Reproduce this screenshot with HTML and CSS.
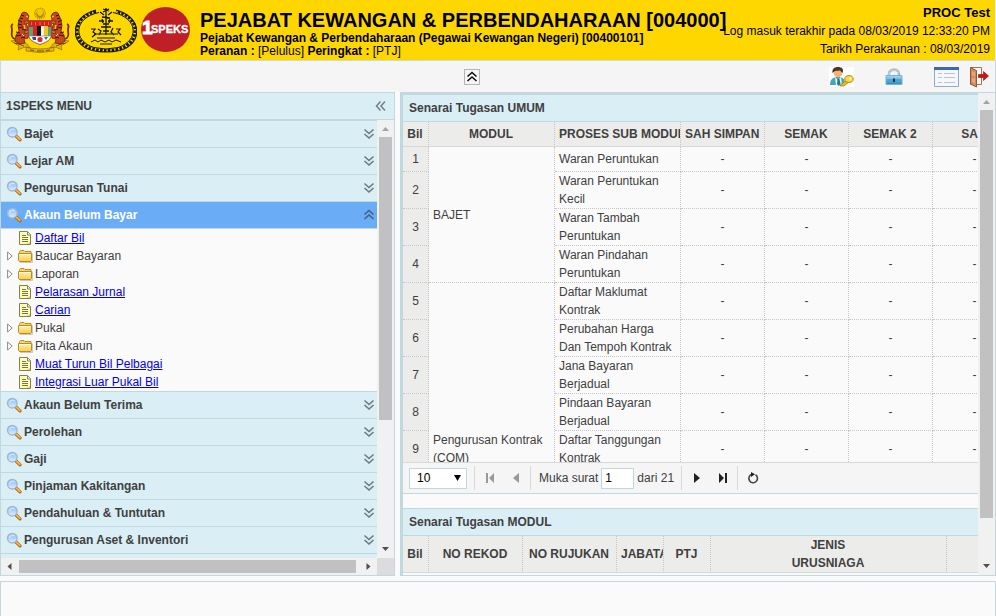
FILE: index.html
```html
<!DOCTYPE html>
<html lang="ms">
<head>
<meta charset="utf-8">
<title>1SPEKS</title>
<link rel="stylesheet" href="styles.css">
</head>
<body>
<svg class="sprite" aria-hidden="true">
  <defs>
    <linearGradient id="lensFill" x1="0" y1="0" x2="0" y2="1"><stop offset="0" stop-color="#84b9f8"/><stop offset="1" stop-color="#dcf1ff"/></linearGradient>
    <linearGradient id="folderFill" x1="0" y1="0" x2="0" y2="1"><stop offset="0" stop-color="#fff4ae"/><stop offset="1" stop-color="#fbcb4f"/></linearGradient>
    <linearGradient id="lockFill" x1="0" y1="0" x2="0" y2="1"><stop offset="0" stop-color="#a9dcf5"/><stop offset="1" stop-color="#2787bd"/></linearGradient>
  </defs>
  <symbol id="lens" viewBox="0 0 16 16">
    <path d="M10 10l4 3.800" stroke="#a8651c" stroke-width="3.200" stroke-linecap="round"/>
    <path d="M10.600 10.400l3.200 3" stroke="#ffb443" stroke-width="1.800" stroke-linecap="round"/>
    <circle cx="6.300" cy="6.200" r="4.800" fill="url(#lensFill)" stroke="#a9b4c6" stroke-width="1.400"/>
    <path d="M3.500 5.600a3 3 0 0 1 5-1.700" fill="none" stroke="#d4e9ff" stroke-width="1.300"/>
  </symbol>
  <symbol id="down" viewBox="0 0 12 12"><path d="M1.500 1.500L6 5.500L10.500 1.500M1.500 6L6 10L10.500 6" fill="none" stroke="currentColor" stroke-width="1.600"/></symbol>
  <symbol id="up" viewBox="0 0 12 12"><path d="M1.500 5.500L6 1.500L10.500 5.500M1.500 10L6 6L10.500 10" fill="none" stroke="currentColor" stroke-width="1.600"/></symbol>
  <symbol id="left" viewBox="0 0 12 12"><path d="M6.500 1.500L2.500 6L6.500 10.500M11 1.500L7 6L11 10.500" fill="none" stroke="currentColor" stroke-width="1.500"/></symbol>
  <symbol id="doc" viewBox="0 0 16 16">
    <path d="M1.500 1.500h8l3 3v10h-11z" fill="#ffffa8" stroke="#80805f"/>
    <path d="M9.500 2v3h3" fill="#fff" stroke="#80805f"/>
    <path d="M4 5.500h4M4 7.500h6M4 9.500h6M4 11.500h6" stroke="#747466"/>
    <path d="M8 14h4v-2z" fill="#f1c97b"/>
  </symbol>
  <symbol id="folder" viewBox="0 0 16 16">
    <path d="M2 14.500h12.500v-9" fill="none" stroke="#c9c9c9"/>
    <path d="M1.500 4.500v-1l1-1h3.500l1 1h6v10h-11.500z" fill="#f5d46e" stroke="#bc8b22"/>
    <path d="M.500 5.500h13v7l-1 1h-11l-1-1z" fill="url(#folderFill)" stroke="#bd8c24"/>
    <path d="M1.500 6.500h11" stroke="#fffbdc"/>
  </symbol>
  <symbol id="tri" viewBox="0 0 6 10"><path d="M.6 1v8L5.200 5z" fill="#fff" stroke="#8a8a8a"/></symbol>
</svg>

<header class="banner">
  <div class="logos">
    <svg class="crest" viewBox="0 0 62 46" role="img" aria-label="Jata Negara">
      <circle cx="31" cy="6.500" r="5.200" fill="#f4cb00" stroke="#b99318" stroke-width="1.400" stroke-dasharray="1.200 .8"/>
      <path d="M28.500 4a3.800 3.800 0 1 0 5 0a3 3 0 1 1-5 0z" fill="#a78318"/>
      <path d="M2 34l8-1 8 4 3 4-5-1-7 3 1-4zM60 34l-8-1-8 4-3 4 5-1 7 3-1-4zM17 40q14 4 28 0v4q-14 3-28 0z" fill="#e2b417" stroke="#8c6c10" stroke-width=".7"/>
      <path d="M5 36l5 1 5 2M57 36l-5 1-5 2M21 43l4 .5M28 44h7M37 43.500l4-.5" fill="none" stroke="#604c0b" stroke-width=".9"/>
      <g id="tiger">
        <path d="M6 32C1 30 3 26 3 23s-2-5 1-6" fill="none" stroke="#7c2a0c" stroke-width="1.800"/>
        <path d="M13 6l2-1 3 1 2 3-1 3 1 3-3 2 2 3-1 5 2 3-1 3-4 1 1 4-6 1-4-3 1-6 3-4-1-5 1-6z" fill="#c9451a" stroke="#541a10" stroke-width=".7"/>
        <path d="M15 14l5 0 1 2-5 1zM15 24l5-1 1 2-5 2z" fill="#d8642c" stroke="#541a10" stroke-width=".5"/>
        <path d="M9 13l4 2M9 17l4 1M9 21l5-1M7 25l4 1M7 29l5-1M12 8l3 1M11 11l3 1M13 22l4 1M12 31l4-1" stroke="#321712" stroke-width="1"/>
        <path d="M17 9l2 1M15 18l1 4M13 27l2 2" stroke="#ffd888" stroke-width="1"/>
      </g>
      <use href="#tiger" transform="matrix(-1 0 0 1 62 0)"/>
      <path d="M19.500 13.500h23v14c0 5-5 8-11.500 10-6.500-2-11.500-5-11.500-10z" fill="#fff" stroke="#8b2a20" stroke-width=".8"/>
      <path d="M20 14h22v6H20z" fill="#d71e28"/>
      <path d="M22.500 15v3M26.500 15v3M31 15v3M35.500 15v3M39.500 15v3" stroke="#f5a420" stroke-width=".7"/>
      <path d="M24 19h4v10h-4z" fill="#d9222b"/><path d="M28 19h4v10h-4z" fill="#15151a"/><path d="M32 19h3v10h-3z" fill="#f7f3e0"/><path d="M35 19h4v10h-4z" fill="#ebc52a"/>
      <path d="M20 20h4v9h-4zM39 20h3v9h-3z" fill="#59a566"/>
      <path d="M23 30h4v3h-3z" fill="#2d4da0"/><circle cx="31" cy="32.500" r="2.600" fill="#d52a39"/><path d="M35 30h4l-2 3z" fill="#3566b0"/><path d="M20 29h22" stroke="#777" stroke-width=".6"/>
    </svg>
    <svg class="crest" viewBox="0 0 62 46" role="img" aria-label="Jabatan Akauntan Negara">
      <g fill="none" stroke="#151803">
        <path d="M24 5.500C-2 11-2 34 19 40.500q12 3 24 0C64 34 64 11 38 5.500" stroke-width="1"/>
        <path d="M21 3C-6 10-6 37 17 43.500q14 3 28 0C68 37 68 10 41 3" stroke-width="1.200"/>
        <path d="M21 4.500C-4 10-4 35.500 18 42q13 3 26 0C66 35.500 66 10 41 4.500" stroke-width="3" stroke-dasharray="2.600 1.300"/>
        <path d="M31 1v27M28 2l6 2M34 2l-6 3M25 5l4 3M37 5l-4 3M27 10l8 1M24 14h5M33 14h5M28 17h6M26 20h10M28 24h6M27 12l1 4M35 12l-1 4" stroke-width="1.300"/>
        <path d="M16 22h4l-2 3 3 2-4 3M23 22l3 2-2 4M38 21l-2 4 3 3M41 22h4l-2 3 3 3M19 27h24M22 31h18" stroke-width="1.200"/>
        <path d="M16 35l4-2 3 2 3-2 4 2 4-2 3 2 4-2 5 2M25 37h12" stroke-width="1"/>
      </g>
    </svg>
    <svg class="crest" viewBox="0 0 62 46" role="img" aria-label="1SPEKS">
      <ellipse cx="24.500" cy="22.500" rx="24.500" ry="22.500" fill="#bf2026"/>
      <text class="mark-one" x="1" y="27">1</text><text class="mark-name" x="10" y="26">SPEKS</text>
    </svg>
  </div>
  <div class="office">
    <h1>PEJABAT KEWANGAN &amp; PERBENDAHARAAN [004000]</h1>
    <p><b>Pejabat Kewangan &amp; Perbendaharaan (Pegawai Kewangan Negeri) [00400101]</b></p>
    <p><b>Peranan :</b> [Pelulus] <b>Peringkat :</b> [PTJ]</p>
  </div>
  <div class="session">
    <p class="user">PROC Test</p>
    <p>Log masuk terakhir pada 08/03/2019 12:33:20 PM</p>
    <p>Tarikh Perakaunan : 08/03/2019</p>
  </div>
</header>

<div class="toolbar">
  <button class="fold" type="button" aria-label="Tutup pengepala"><svg width="12" height="12"><use href="#up"/></svg></button>
  <div class="tools">
    <button type="button" aria-label="Pengguna"><svg width="25" height="20" viewBox="0 0 25 20">
      <path d="M0 0h25v20H0z" fill="#fff"/>
      <path d="M1 18c0-5 2-7 6-8h4c4 1 5 3 5 8z" fill="#4aa3bd"/><path d="M6 10l3 3 3-3 1 8H7z" fill="#edf8ff"/><path d="M8.500 12h2l1 5-2 2-1.500-2z" fill="#128098"/>
      <circle cx="9" cy="6" r="4.300" fill="#f2b577"/><path d="M3.500 6C3 2 5 0 9 0s6 2 4.500 6L11 3.500 6 4z" fill="#51341f"/>
      <path d="M18 13l-7 5v1h4l5-4z" fill="#e9b623" stroke="#a8750b" stroke-width=".7"/><ellipse cx="20" cy="12" rx="4.200" ry="3.400" fill="#ffd94b" stroke="#bf850f"/><circle cx="21.500" cy="11.500" r="1" fill="#fff"/>
    </svg></button>
    <button type="button" aria-label="Kunci"><svg width="18" height="18" viewBox="0 0 18 18">
      <path d="M4 9V5.500C4 .5 14 .5 14 5.500V9" fill="none" stroke="#9fb0b9" stroke-width="2.400"/><path d="M4 8.500V5.500C4 1 14 1 14 5.500" fill="none" stroke="#d5e1e6"/>
      <path d="M1 7.500h16v9H1z" fill="url(#lockFill)" stroke="#6fb6da"/><path d="M1.500 12h15" stroke="#3f97c6"/><path d="M8 10.500h2v3.500H8z" fill="#123a58"/>
    </svg></button>
    <button type="button" aria-label="Senarai"><svg width="25" height="20" viewBox="0 0 25 20">
      <path d="M.5.5h24v19H.5z" fill="#f4f8fc" stroke="#90aacb"/><path d="M0 0h25v3H0z" fill="#3f66ae"/>
      <path d="M4 6.500h4M4 10.500h4M4 15.500h4M10 6.500h11M10 10.500h11M10 15.500h11" stroke="#c2c2c7"/>
    </svg></button>
    <button type="button" aria-label="Log keluar"><svg width="19" height="22" viewBox="0 0 19 22">
      <path d="M.5 1.500h11v17H.5z" fill="#fff" stroke="#a86f4b"/><path d="M.5 1.500l6 3v16.500l-6-3z" fill="#d08a5c" stroke="#985633"/><path d="M2 5l3 1.500v4L2 9.500zM2 11.500l3 1v5L2 16z" fill="#e5a679"/>
      <path d="M8.500 8.500h5v-3l5 4.500-5 4.500v-3h-5z" fill="#c91313" stroke="#9b0707" stroke-width=".6"/>
    </svg></button>
  </div>
</div>

<main class="work">
  <nav class="side">
    <div class="side-head"><span>1SPEKS MENU</span><svg width="12" height="12"><use href="#left"/></svg></div>
    <div class="side-body">
      <div class="groups">
        <button class="group" type="button"><svg class="lens"><use href="#lens"/></svg><span>Bajet</span><svg class="chev"><use href="#down"/></svg></button>
        <button class="group" type="button"><svg class="lens"><use href="#lens"/></svg><span>Lejar AM</span><svg class="chev"><use href="#down"/></svg></button>
        <button class="group" type="button"><svg class="lens"><use href="#lens"/></svg><span>Pengurusan Tunai</span><svg class="chev"><use href="#down"/></svg></button>
        <button class="group open" type="button"><svg class="lens"><use href="#lens"/></svg><span>Akaun Belum Bayar</span><svg class="chev"><use href="#up"/></svg></button>
        <ul class="tree">
          <li><i></i><svg class="node"><use href="#doc"/></svg><a href="#">Daftar Bil</a></li>
          <li><i><svg class="tri"><use href="#tri"/></svg></i><svg class="node"><use href="#folder"/></svg>Baucar Bayaran</li>
          <li><i><svg class="tri"><use href="#tri"/></svg></i><svg class="node"><use href="#folder"/></svg>Laporan</li>
          <li><i></i><svg class="node"><use href="#doc"/></svg><a href="#">Pelarasan Jurnal</a></li>
          <li><i></i><svg class="node"><use href="#doc"/></svg><a href="#">Carian</a></li>
          <li><i><svg class="tri"><use href="#tri"/></svg></i><svg class="node"><use href="#folder"/></svg>Pukal</li>
          <li><i><svg class="tri"><use href="#tri"/></svg></i><svg class="node"><use href="#folder"/></svg>Pita Akaun</li>
          <li><i></i><svg class="node"><use href="#doc"/></svg><a href="#">Muat Turun Bil Pelbagai</a></li>
          <li><i></i><svg class="node"><use href="#doc"/></svg><a href="#">Integrasi Luar Pukal Bil</a></li>
        </ul>
        <button class="group" type="button"><svg class="lens"><use href="#lens"/></svg><span>Akaun Belum Terima</span><svg class="chev"><use href="#down"/></svg></button>
        <button class="group" type="button"><svg class="lens"><use href="#lens"/></svg><span>Perolehan</span><svg class="chev"><use href="#down"/></svg></button>
        <button class="group" type="button"><svg class="lens"><use href="#lens"/></svg><span>Gaji</span><svg class="chev"><use href="#down"/></svg></button>
        <button class="group" type="button"><svg class="lens"><use href="#lens"/></svg><span>Pinjaman Kakitangan</span><svg class="chev"><use href="#down"/></svg></button>
        <button class="group" type="button"><svg class="lens"><use href="#lens"/></svg><span>Pendahuluan &amp; Tuntutan</span><svg class="chev"><use href="#down"/></svg></button>
        <button class="group" type="button"><svg class="lens"><use href="#lens"/></svg><span>Pengurusan Aset &amp; Inventori</span><svg class="chev"><use href="#down"/></svg></button>
      </div>
      <div class="vbar"><svg class="arrow dim" viewBox="0 0 17 17"><path d="M5 11h7L8.500 7z"/></svg><div class="track"><div class="thumb menu-thumb"></div></div><svg class="arrow" viewBox="0 0 17 17"><path d="M5 6h7l-3.500 4z"/></svg></div>
      <div class="hbar"><svg class="arrow" viewBox="0 0 17 17"><path d="M10.500 5v7L6.500 8.500z"/></svg><div class="track"><div class="thumb"></div></div><svg class="arrow" viewBox="0 0 17 17"><path d="M6.500 5v7l4-3.500z"/></svg></div>
      <div class="corner"></div>
    </div>
  </nav>

  <section class="content">
    <div class="panels">
      <h2>Senarai Tugasan UMUM</h2>
      <div class="grid-view">
        <table class="tasks">
          <colgroup><col class="c-no"><col class="c-text"><col class="c-text"><col class="c-step"><col class="c-step"><col class="c-step"><col class="c-step"></colgroup>
          <thead><tr><th>Bil</th><th>MODUL</th><th>PROSES SUB MODUL</th><th>SAH SIMPAN</th><th>SEMAK</th><th>SEMAK 2</th><th>SAH</th></tr></thead>
          <tbody>
            <tr><td>1</td><td rowspan="4">BAJET</td><td>Waran Peruntukan</td><td>-</td><td>-</td><td>-</td><td>-</td></tr>
            <tr><td>2</td><td>Waran Peruntukan Kecil</td><td>-</td><td>-</td><td>-</td><td>-</td></tr>
            <tr><td>3</td><td>Waran Tambah Peruntukan</td><td>-</td><td>-</td><td>-</td><td>-</td></tr>
            <tr><td>4</td><td>Waran Pindahan Peruntukan</td><td>-</td><td>-</td><td>-</td><td>-</td></tr>
            <tr><td>5</td><td rowspan="9">Pengurusan Kontrak (COM)</td><td>Daftar Maklumat Kontrak</td><td>-</td><td>-</td><td>-</td><td>-</td></tr>
            <tr><td>6</td><td>Perubahan Harga Dan Tempoh Kontrak</td><td>-</td><td>-</td><td>-</td><td>-</td></tr>
            <tr><td>7</td><td>Jana Bayaran Berjadual</td><td>-</td><td>-</td><td>-</td><td>-</td></tr>
            <tr><td>8</td><td>Pindaan Bayaran Berjadual</td><td>-</td><td>-</td><td>-</td><td>-</td></tr>
            <tr><td>9</td><td>Daftar Tanggungan Kontrak</td><td>-</td><td>-</td><td>-</td><td>-</td></tr>
            <tr class="blank"><td></td><td></td><td></td><td></td><td></td><td></td></tr>
            <tr class="blank"><td></td><td></td><td></td><td></td><td></td><td></td></tr>
            <tr class="blank"><td></td><td></td><td></td><td></td><td></td><td></td></tr>
            <tr class="blank"><td></td><td></td><td></td><td></td><td></td><td></td></tr>
          </tbody>
        </table>
      </div>
      <div class="pager">
        <div class="size"><select aria-label="Bilangan rekod"><option>10</option></select><svg viewBox="0 0 8 8"><path d="M0 1h7L3.500 7z"/></svg></div>
        <div class="pg-group">
          <button type="button" disabled aria-label="Pertama"><svg viewBox="0 0 12 12"><path d="M2 1h2v10H2zM10 1v10L5 6z"/></svg></button>
          <button type="button" disabled aria-label="Sebelum"><svg viewBox="0 0 12 12"><path d="M9 1v10L3 6z"/></svg></button>
        </div>
        <div class="pg-group pg-page"><label for="page">Muka surat</label><input id="page" type="text" value="1"><span>dari 21</span></div>
        <div class="pg-group">
          <button type="button" aria-label="Seterusnya"><svg viewBox="0 0 12 12"><path d="M3 1v10l6-5z"/></svg></button>
          <button type="button" aria-label="Terakhir"><svg viewBox="0 0 12 12"><path d="M2 1v10l5-5zM8 1h2v10H8z"/></svg></button>
        </div>
        <div class="pg-group">
          <button type="button" aria-label="Muat semula"><svg viewBox="0 0 12 12"><path d="M8.500 2.800A4.300 4.300 0 1 1 5 2.300" fill="none" stroke="#444" stroke-width="1.600"/><path d="M4 0l4 2.200L4 5z"/></svg></button>
        </div>
      </div>
      <h2 class="second">Senarai Tugasan MODUL</h2>
      <div class="head-view">
        <table class="records">
          <colgroup><col class="c-no"><col class="c-ref"><col class="c-ref"><col class="c-unit"><col class="c-unit"><col class="c-kind"><col class="c-step"></colgroup>
          <thead><tr><th>Bil</th><th>NO REKOD</th><th>NO RUJUKAN</th><th>JABATAN</th><th>PTJ</th><th>JENIS<br>URUSNIAGA</th><th></th></tr></thead>
        </table>
      </div>
    </div>
    <div class="vbar"><svg class="arrow dim" viewBox="0 0 17 17"><path d="M5 11h7L8.500 7z"/></svg><div class="track"><div class="thumb page-thumb"></div></div><svg class="arrow" viewBox="0 0 17 17"><path d="M5 6h7l-3.500 4z"/></svg></div>
  </section>
</main>
<footer class="foot"></footer>
</body>
</html>
```
FILE: styles.css
```css
* { box-sizing: border-box; }

body {
  margin: 0;
  height: 100vh;
  display: flex;
  flex-direction: column;
  overflow: hidden;
  background: #fafafa;
  color: #404040;
  font: 12px/18px "Liberation Sans", Arial, sans-serif;
}

button, input, select { font: inherit; color: inherit; }
button { padding: 0; border: 0; background: none; }
svg { display: block; flex: none; }
h1, h2, p, ul { margin: 0; padding: 0; }
.sprite { position: absolute; width: 0; height: 0; }

/* Banner */
.banner {
  flex: none;
  display: flex;
  height: 60px;
  margin-right: 1px;
  padding-right: 5px;
  background: #ffd700;
  color: #000;
  white-space: nowrap;
}
.logos { display: flex; gap: 4px; padding: 7px 0 0 9px; width: 200px; flex: none; }
.crest { width: 62px; height: 46px; }
.mark-one { font: bold 19px "Liberation Sans", Arial, sans-serif; fill: #fff; stroke: #fff; }
.mark-name { font: bold 11px "Liberation Sans", Arial, sans-serif; fill: #fff; stroke: #fff; stroke-width: 0.3px; }
.office { flex: 1; min-width: 0; padding-top: 8px; }
.office h1 { font-size: 20px; line-height: 24px; }
.office p { line-height: 13px; }
.session { flex: none; padding-top: 4px; text-align: right; }
.session .user { font-size: 13px; font-weight: bold; }

/* Toolbar */
.toolbar {
  flex: none;
  display: flex;
  align-items: center;
  height: 32px;
  padding: 0 6px 0 463px;
  border: 1px solid #c5dae1;
  border-bottom: 0;
  background: #f5f5f5;
}
.fold {
  display: grid;
  place-items: center;
  width: 16px;
  height: 16px;
  border: 1px solid #b5b5b5;
  color: #111;
}
.tools { display: flex; align-items: center; margin-left: auto; }
.tools button { margin-left: 31px; }
.tools button:last-child { margin-left: 11px; }

/* Work area */
.work { flex: 1; min-height: 0; display: flex; gap: 5px; }
.side {
  flex: none;
  display: flex;
  flex-direction: column;
  width: 395px;
  border: 1px solid #c2d8df;
}
.side-head {
  flex: none;
  display: flex;
  align-items: center;
  justify-content: space-between;
  height: 27px;
  padding: 0 8px 0 5px;
  border-bottom: 1px solid #c2d8df;
  background: #daeef5;
  color: #404040;
  font-weight: bold;
}
.side-head svg { color: #747f84; }
.side-body {
  flex: 1;
  min-height: 0;
  display: grid;
  grid-template: minmax(0, 1fr) 17px / minmax(0, 1fr) 17px;
}
.groups { overflow: hidden; background: #daeef5; border-top: 1px solid #c2d8df; }
.group {
  display: flex;
  align-items: center;
  width: 100%;
  height: 27px;
  padding: 0 2px 0 5px;
  border-bottom: 1px solid #c2d8df;
  font-weight: bold;
}
.group span { flex: 1; margin-left: 2px; text-align: left; }
.group.open { background: #6aacf6; color: #fff; }
.lens { width: 16px; height: 16px; }
.chev { width: 12px; height: 12px; color: #6d7b81; }
.group.open .chev { color: #41627f; }
.tree { background: #fafafa; list-style: none; border-bottom: 1px solid #c2d8df; }
.tree li { display: flex; align-items: center; height: 18px; }
.tree i { width: 17px; padding-left: 6px; }
.tri { width: 6px; height: 10px; }
.node { width: 16px; height: 16px; margin-right: 1px; }
.tree a { color: #0000ee; }

/* Scroll bars */
.vbar, .hbar { display: flex; background: #f1f1f1; }
.vbar { flex: none; flex-direction: column; width: 17px; }
.track { flex: 1; min-width: 0; min-height: 0; padding: 0 2px; }
.hbar .track { padding: 2px 1px; }
.thumb { height: 100%; background: #c1c1c1; }
.hbar .thumb { width: 99%; }
.menu-thumb { height: 70%; }
.page-thumb { height: 91%; }
.arrow { width: 17px; height: 17px; fill: #505050; }
.dim { fill: #a3a3a3; }
.corner { background: #dcdcdc; }

/* Content */
.content {
  flex: 1;
  min-width: 0;
  display: flex;
  border: 1px solid #c2d8df;
  border-left-width: 3px;
}
.panels { flex: 1; min-width: 0; overflow: hidden; border-top: 2px solid #c2d8df; }
.panels h2 {
  height: 27px;
  padding-left: 6px;
  border-bottom: 1px solid #c2d8df;
  background: #daeef5;
  font-size: 12px;
  line-height: 26px;
}
.panels h2.second { height: 28px; margin-top: 14px; border-top: 1px solid #c2d8df; }
.grid-view { height: 340px; overflow: hidden; }
.head-view { overflow: hidden; }
table { table-layout: fixed; border-collapse: separate; border-spacing: 0; }
.tasks { width: 614px; }
.records { width: 628px; }
.c-no { width: 26px; }
.c-text { width: 126px; }
.c-step { width: 84px; }
.c-ref { width: 94px; }
.c-unit { width: 47px; }
.c-kind { width: 236px; }
th {
  height: 25px;
  padding: 0 5px 0 4px;
  overflow: hidden;
  border-right: 1px dotted #c6c6c6;
  border-bottom: 1px solid #d8d8d8;
  background: #ececea;
  white-space: nowrap;
}
.records th { height: 37px; }
td {
  height: 25px;
  padding: 0 4px;
  border-right: 1px dotted #c6c6c6;
  border-bottom: 1px dotted #c6c6c6;
  text-align: center;
}
td:first-child { background: #ececea; }
td[rowspan], td:nth-last-child(5) { text-align: left; }
.blank td { height: 37px; }

/* Pager */
.pager {
  display: flex;
  align-items: center;
  height: 32px;
  padding-left: 6px;
  border-top: 1px solid #d8d8d8;
  border-bottom: 1px solid #c2d8df;
  background: #f5f5f5;
}
.size { display: grid; align-items: center; margin-right: 7px; }
.size > * { grid-area: 1 / 1; }
.size svg { width: 8px; height: 8px; margin-right: 5px; justify-self: end; pointer-events: none; }
.size select {
  appearance: none;
  width: 58px;
  height: 21px;
  padding: 0 7px;
  border: 1px solid #c2d8df;
  border-radius: 0;
  background: #fff;
  color: #000;
}
.pg-group {
  display: flex;
  align-items: center;
  height: 24px;
  padding: 0 1px 0 2px;
  border-left: 1px solid #d8d8d8;
}
.pg-group button { display: grid; place-items: center; width: 26px; height: 24px; }
.pg-group svg { width: 12px; height: 12px; fill: #222; }
.pg-group button:disabled svg { fill: #999; }
.pg-group.pg-page { gap: 3px; padding: 0 7px 0 8px; }
.pg-page input {
  width: 33px;
  height: 21px;
  padding: 0 3px;
  border: 1px solid #c2d8df;
  background: #fff;
  color: #000;
}

.foot { flex: none; height: 35px; margin-top: 5px; border: 1px solid #c2d8df; border-bottom: 0; }
```
